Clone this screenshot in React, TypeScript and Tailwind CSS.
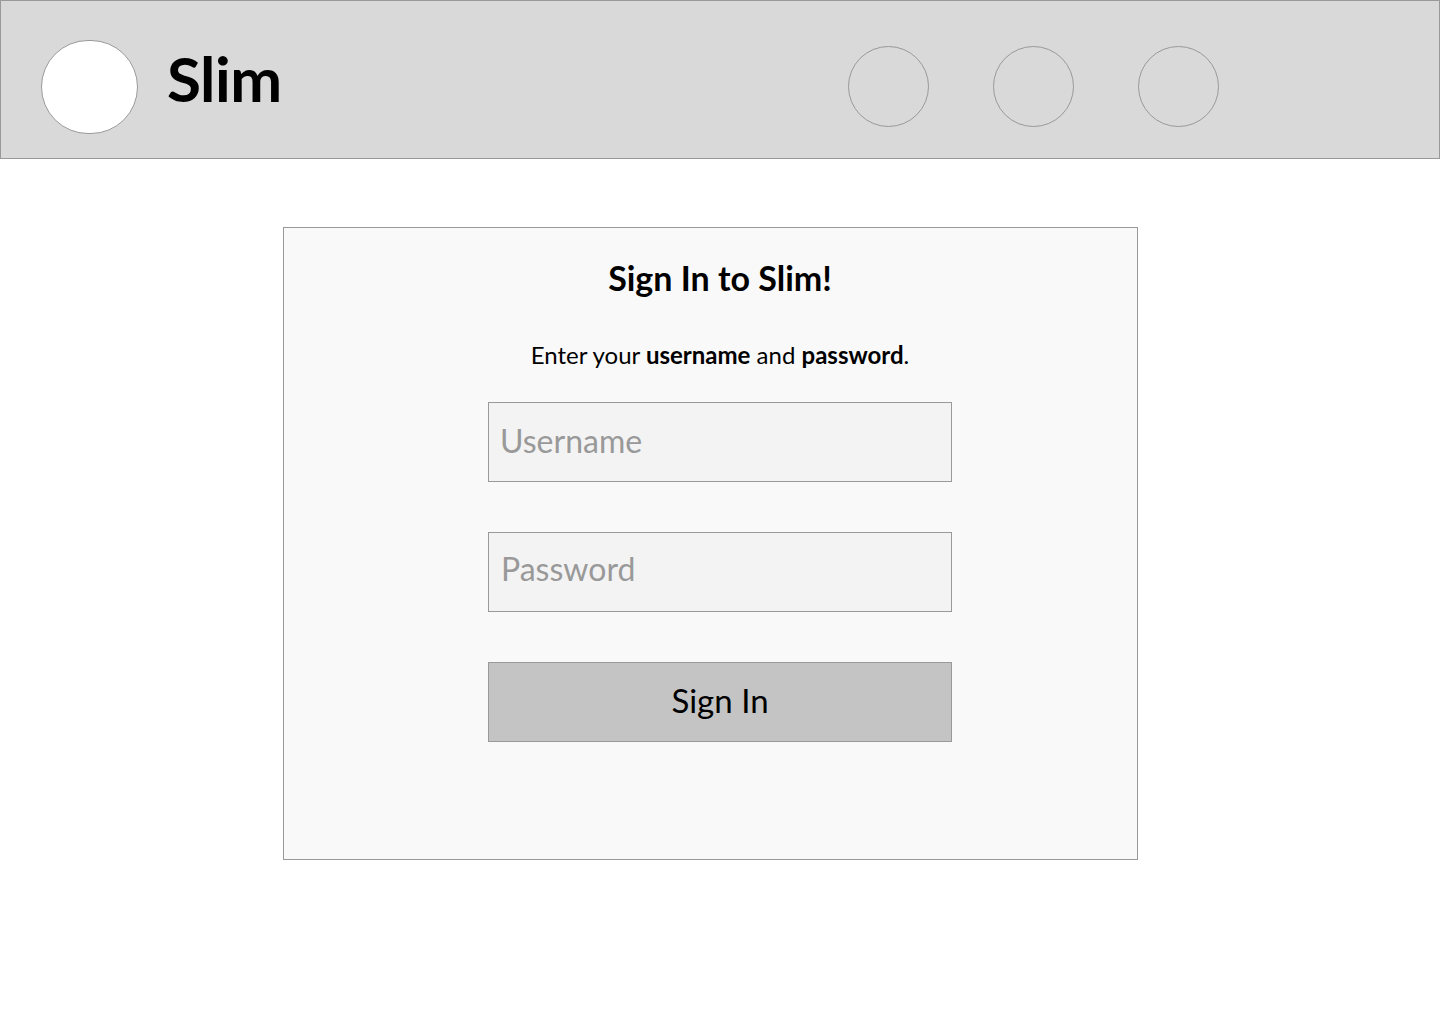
import React from "react";

export default function App() {
  const font = { fontFamily: "Lato, 'Open Sans', 'Liberation Sans', sans-serif" };
  return (
    <div className="w-[1440px] h-[1024px] bg-white" style={font}>
      <header className="h-[159px] bg-[#d9d9d9] border border-[#999999] flex items-center pt-[14px] pl-[40px] pr-[220px]">
        <div className="w-[97px] h-[94px] rounded-full bg-white border border-[#999999] shrink-0" />
        <div className="ml-[29px] text-[62px] leading-none font-bold text-black tracking-[-0.5px] -mt-[18px]">Slim</div>
        <div className="ml-auto flex gap-[64px]">
          <div className="w-[81px] h-[81px] rounded-full border border-[#999999]" />
          <div className="w-[81px] h-[81px] rounded-full border border-[#999999]" />
          <div className="w-[81px] h-[81px] rounded-full border border-[#999999]" />
        </div>
      </header>
      <main className="pt-[68px]">
        <div className="ml-[283px] w-[855px] h-[633px] bg-[#f9f9f9] border border-[#999999] pt-[30px]">
          <div className="ml-[204px] w-[464px] flex flex-col items-center">
            <h1 className="text-[34px] leading-[40px] font-bold text-black">Sign In to Slim!</h1>
            <p className="mt-[43px] text-[24px] leading-[28px] text-black">
              Enter your <span className="font-bold">username</span> and <span className="font-bold">password</span>.
            </p>
            <div className="mt-[33px] w-[464px] h-[80px] bg-[#f3f3f3] border border-[#999999] flex items-center pl-[11px]">
              <span className="text-[32px] text-[#999999] leading-none -mt-[2px]">Username</span>
            </div>
            <div className="mt-[50px] w-[464px] h-[80px] bg-[#f3f3f3] border border-[#999999] flex items-center pl-[12px]">
              <span className="text-[32px] text-[#999999] leading-none -mt-[6px]">Password</span>
            </div>
            <div className="mt-[50px] w-[464px] h-[80px] bg-[#c4c4c4] border border-[#999999] flex items-center justify-center">
              <span className="text-[33px] text-black leading-none -mt-[4px]">Sign In</span>
            </div>
          </div>
        </div>
      </main>
    </div>
  );
}
